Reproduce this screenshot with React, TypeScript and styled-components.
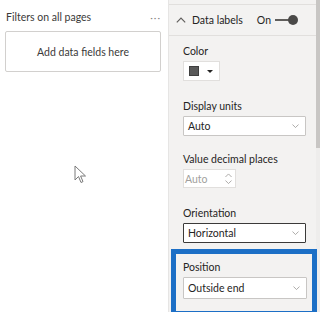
import React from 'react'
import styled, { createGlobalStyle } from 'styled-components'

const GlobalStyle = createGlobalStyle`
    html, body {
        margin: 0;
        padding: 0;
        background: #ffffff;
    }
    body {
        font-family: "Lato", "Noto Sans", sans-serif;
        font-size: 10.5px;
        color: #252423;
    }
`

const Page = styled.div`
    position: relative;
    display: flex;
    width: 320px;
    height: 312px;
    overflow: hidden;
`

const FiltersPane = styled.div`
    width: 169px;
    flex-shrink: 0;
    background: #ffffff;
    border-right: 1px solid #e6e5e4;
    box-sizing: border-box;
    padding: 0 7px 0 5px;
`

const FiltersHeader = styled.div`
    display: flex;
    align-items: center;
    justify-content: space-between;
    height: 31px;
    padding: 2px 0 0 1px;
    box-sizing: border-box;
    color: #3b3a39;
`

const More = styled.span`
    color: #8a8886;
    letter-spacing: 1px;
    font-size: 10px;
`

const DropCard = styled.div`
    height: 39px;
    border: 1px solid #d2d0ce;
    border-radius: 2px;
    display: flex;
    align-items: center;
    justify-content: center;
    color: #3b3a39;
`

const FormatPane = styled.div`
    flex: 1;
    display: flex;
    background: #f3f2f1;
`

const FormatBody = styled.div`
    flex: 1;
`

const TopStrip = styled.div`
    height: 4px;
    border-bottom: 1px solid #e1dfdd;
`

const SectionHeader = styled.div`
    display: flex;
    align-items: center;
    height: 30px;
    padding-left: 7px;
    border-bottom: 1px solid #e1dfdd;
`

const HeaderTitle = styled.span`
    margin-left: 6px;
    flex: 1;
`

const ToggleText = styled.span`
    margin-right: 4px;
`

const Toggle = styled.span`
    position: relative;
    width: 20px;
    height: 10px;
    margin-right: 21px;
    display: inline-flex;
    align-items: center;

    &::before {
        content: '';
        width: 100%;
        height: 2px;
        background: #605e5c;
    }

    &::after {
        content: '';
        position: absolute;
        right: -3px;
        top: 0;
        width: 10px;
        height: 10px;
        border-radius: 50%;
        background: #4a4948;
    }
`

const Settings = styled.div`
    display: flex;
    flex-direction: column;
    padding: 7px 10px 0 14px;
`

const Field = styled.div<{ gap?: number }>`
    display: flex;
    flex-direction: column;
    flex-shrink: 0;
    margin-bottom: ${({ gap }) => gap ?? 14}px;
`

const Label = styled.div`
    line-height: 16px;
    margin-bottom: 2px;
`

const ColorButton = styled.div`
    display: flex;
    align-items: center;
    gap: 8px;
    width: 37px;
    height: 20px;
    box-sizing: border-box;
    padding-left: 5px;
    background: #ffffff;
    border: 1px solid #e1dfdd;
`

const Swatch = styled.span`
    width: 10px;
    height: 10px;
    background: #595959;
    border: 1px solid #3f3f3f;
    box-sizing: border-box;
`

const Caret = styled.span`
    width: 0;
    height: 0;
    border-left: 3px solid transparent;
    border-right: 3px solid transparent;
    border-top: 3px solid #252423;
`

const Select = styled.div<{ active?: boolean; tall?: boolean }>`
    display: flex;
    align-items: center;
    justify-content: space-between;
    height: ${({ tall }) => (tall ? 22 : 20)}px;
    box-sizing: border-box;
    padding: 0 6px 0 4px;
    background: #ffffff;
    border: 1px solid ${({ active }) => (active ? '#3b3a39' : '#c8c6c4')};
    border-radius: 1px;
`

const Spin = styled.div`
    display: flex;
    align-items: center;
    justify-content: space-between;
    width: 53px;
    height: 19px;
    box-sizing: border-box;
    padding: 0 3px 0 1px;
    background: #ffffff;
    border: 1px solid #e1dfdd;
    color: #a19f9d;
`

const SpinArrows = styled.span`
    display: flex;
    flex-direction: column;
    gap: 3px;
`

const Highlight = styled.div`
    position: relative;
    flex-shrink: 0;
    margin: 6px -11px 0 -12px;
    padding: 5px 5px 12px 7px;
    border: 5px solid #1c6fc6;
`

const ScrollTrack = styled.div`
    width: 4px;
    background: #eeedec;
    display: flex;
    flex-direction: column;
`

const ScrollThumb = styled.div`
    height: 148px;
    background: #c8c6c4;
`

const Pointer = styled.svg`
    position: absolute;
    left: 74px;
    top: 165px;
`

const Chevron: React.FC<{ up?: boolean; color?: string; size?: number }> = ({ up, color = '#a19f9d', size = 7 }) => (
    <svg width={size} height={size / 2 + 1} viewBox="0 0 8 5">
        <path
            d={up ? 'M0.5 4.5 L4 1 L7.5 4.5' : 'M0.5 0.5 L4 4 L7.5 0.5'}
            fill="none"
            stroke={color}
            strokeWidth="1"
        />
    </svg>
)

const SelectField: React.FC<{ label: string; value: string; active?: boolean; tall?: boolean; gap?: number }> = ({
    label,
    value,
    active,
    tall,
    gap,
}) => (
    <Field gap={gap}>
        <Label>{label}</Label>
        <Select active={active} tall={tall}>
            <span>{value}</span>
            <Chevron />
        </Select>
    </Field>
)

const App: React.FC = () => {
    return (
        <Page>
            <GlobalStyle />
            <FiltersPane>
                <FiltersHeader>
                    <span>Filters on all pages</span>
                    <More>···</More>
                </FiltersHeader>
                <DropCard>Add data fields here</DropCard>
            </FiltersPane>
            <FormatPane>
                <FormatBody>
                    <TopStrip />
                    <SectionHeader>
                        <Chevron up color="#605e5c" size={10} />
                        <HeaderTitle>Data labels</HeaderTitle>
                        <ToggleText>On</ToggleText>
                        <Toggle />
                    </SectionHeader>
                    <Settings>
                        <Field gap={17}>
                            <Label>Color</Label>
                            <ColorButton>
                                <Swatch />
                                <Caret />
                            </ColorButton>
                        </Field>
                        <SelectField label="Display units" value="Auto" gap={15} />
                        <Field gap={17}>
                            <Label>Value decimal places</Label>
                            <Spin>
                                <span>Auto</span>
                                <SpinArrows>
                                    <Chevron up />
                                    <Chevron />
                                </SpinArrows>
                            </Spin>
                        </Field>
                        <SelectField label="Orientation" value="Horizontal" active gap={0} />
                        <Highlight>
                            <SelectField label="Position" value="Outside end" tall gap={0} />
                        </Highlight>
                    </Settings>
                </FormatBody>
                <ScrollTrack>
                    <ScrollThumb />
                </ScrollTrack>
            </FormatPane>
            <Pointer width="13" height="20" viewBox="0 0 13 20">
                <path
                    d="M1 1 L1 15 L4.5 11.5 L7 17.5 L9 16.6 L6.6 11 L11.5 11 Z"
                    fill="#ffffff"
                    stroke="#7a7a7a"
                    strokeWidth="1"
                    strokeLinejoin="round"
                />
            </Pointer>
        </Page>
    )
}

export default App
